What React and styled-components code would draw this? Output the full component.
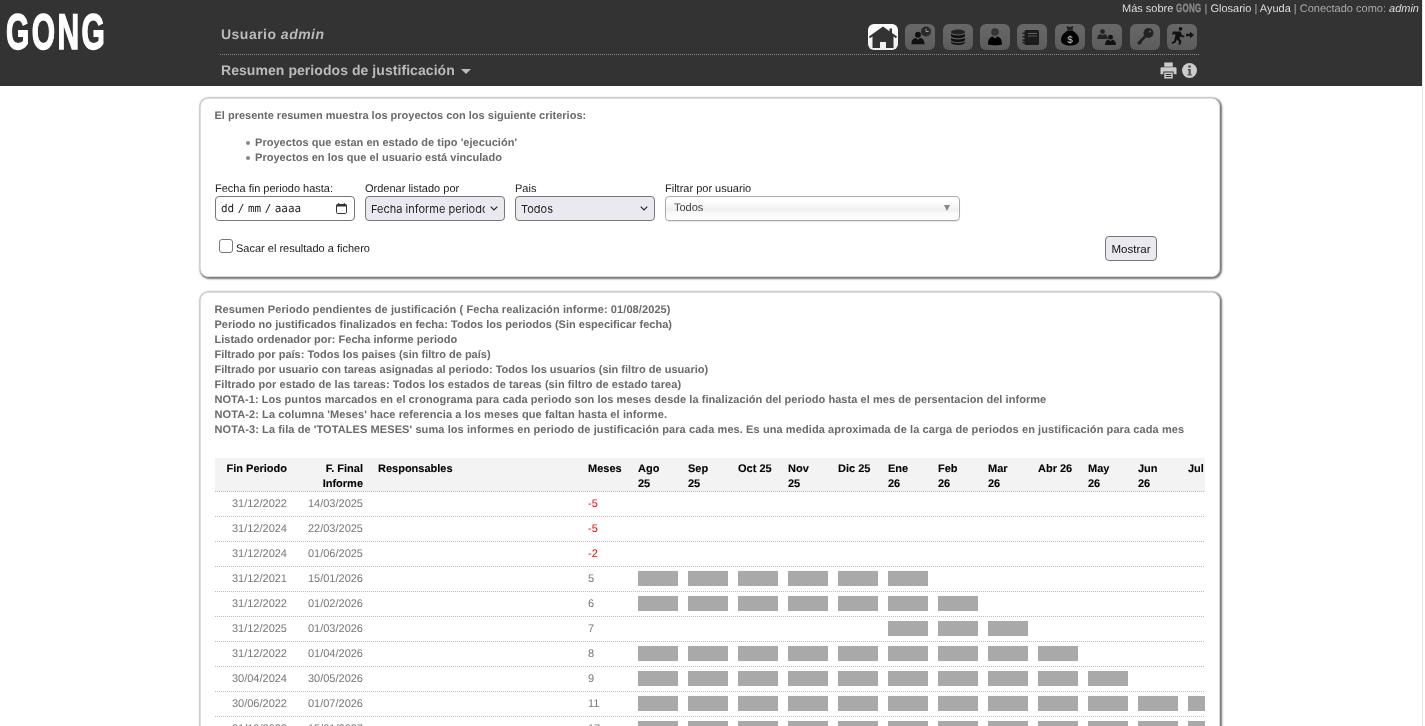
import React from 'react'
import styled, { createGlobalStyle } from 'styled-components'

const Global = createGlobalStyle`
html, body {
    margin: 0;
    padding: 0;
    height: 726px;
    overflow: hidden;
    background: #fff;
    font-family: "Liberation Sans", Arial, sans-serif;
    font-size: 11px;
    text-rendering: geometricPrecision;
}
`

const Root = styled.div`
    width: 1423px;
    height: 726px;
    overflow: hidden;
    box-sizing: border-box;
    border-right: 1px solid #e6e6e6;
    will-change: transform;
`

const Header = styled.header`
    display: grid;
    grid-template-columns: 220px 979px 1fr;
    grid-template-rows: 16px 70px;
    width: 1422px;
    background: #333;
`

const TopLinks = styled.div`
    grid-column: 1 / -1;
    grid-row: 1;
    justify-self: end;
    padding: 2px 3px 0 0;
    color: #aaa;
    font-size: 11px;
    line-height: 13px;
    white-space: nowrap;
    a { color: #ddd; }
    i { color: #ddd; }
`

const MiniGong = styled.span`
    display: inline-block;
    width: 25px;
    color: #888;
    font-weight: bold;
    font-size: 12px;
    line-height: 12px;
    letter-spacing: 0.5px;
    white-space: nowrap;
    -webkit-text-stroke: 0.4px #888;
    & > span {
        display: inline-block;
        transform: scaleX(0.66);
        transform-origin: left center;
    }
`

const Logo = styled.div`
    grid-column: 1;
    grid-row: 1 / 3;
    align-self: start;
    padding: 3px 0 0 6px;
    color: #fff;
    font-weight: bold;
    font-size: 50px;
    line-height: 58px;
    letter-spacing: 4px;
    -webkit-text-stroke: 1.5px #fff;
    white-space: nowrap;
    span {
        display: inline-block;
        transform: scaleX(0.6);
        transform-origin: left center;
    }
`

const HeadMain = styled.div`
    grid-column: 2;
    grid-row: 2;
    display: flex;
    flex-direction: column;
    padding-top: 8px;
`

const UserRow = styled.div`
    display: flex;
    justify-content: space-between;
    align-items: flex-start;
    height: 31px;
    box-sizing: border-box;
    border-bottom: 1px dotted #8a8a8a;
`

const UserName = styled.div`
    padding: 1px 0 0 1px;
    color: #bbb;
    font-weight: bold;
    font-size: 14px;
    line-height: 18px;
    letter-spacing: 0.48px;
    i { font-weight: bold; }
`

const IconBar = styled.nav`
    display: flex;
    gap: 7.4px;
    padding-right: 2px;
`

const IconButton = styled.div`
    width: 30px;
    height: 26px;
    border-radius: 6px;
    background: ${p => (p.$active ? 'linear-gradient(#fff, #eee)' : 'linear-gradient(#686868, #5c5c5c)')};
    color: ${p => (p.$active ? '#333' : '#111')};
    display: flex;
    align-items: center;
    justify-content: center;
`

const TitleRow = styled.div`
    display: flex;
    justify-content: space-between;
    align-items: center;
    height: 30px;
    padding-right: 2px;
`

const PageTitle = styled.div`
    padding-left: 1px;
    color: #bbb;
    font-weight: bold;
    font-size: 14px;
    line-height: 18px;
    letter-spacing: 0.06px;
    display: flex;
    align-items: center;
    gap: 6px;
`

const Caret = styled.span`
    width: 0;
    height: 0;
    margin-top: 3px;
    border-left: 5.5px solid transparent;
    border-right: 5.5px solid transparent;
    border-top: 5px solid #bbb;
`

const Tools = styled.div`
    display: flex;
    align-items: center;
    gap: 5px;
`

const Content = styled.main`
    width: 1020px;
    margin-left: 200px;
    padding-top: 12px;
    display: flex;
    flex-direction: column;
    gap: 15px;
`

const Panel = styled.section`
    box-sizing: border-box;
    padding: 10px 14px;
    border: 1px solid #ddd;
    border-radius: 8px;
    box-shadow: 1px 1px 2px 1px #777, 0 0 2px #bbb;
    background: #fff;
    color: #666;
    height: ${p => p.$height};
`

const Strong = styled.div`
    margin-left: -0.5px;
    font-weight: bold;
    font-size: 11px;
    line-height: 15px;
    letter-spacing: ${p => p.$track || 0}px;
    color: #6a6a6a;
    white-space: nowrap;
`

const Criteria = styled.ul`
    margin: 12px 0 0;
    padding: 0 0 0 40px;
    list-style: none;
    font-weight: bold;
    line-height: 15px;
    letter-spacing: 0.04px;
    color: #6a6a6a;
    li::before {
        content: "";
        display: inline-block;
        width: 4px;
        height: 4px;
        margin: 0 5.5px 1.5px -9.5px;
        border-radius: 50%;
        background: #888;
    }
`

const Filters = styled.div`
    display: flex;
    gap: 10px;
    margin-top: 15px;
`

const Field = styled.div`
    width: ${p => p.$width || 140}px;
`

const FieldLabel = styled.div`
    padding-top: 1px;
    color: #222;
    font-size: 11px;
    line-height: 14px;
`

const DateBox = styled.div`
    box-sizing: border-box;
    height: 25px;
    border: 1px solid #777;
    border-radius: 4px;
    display: flex;
    align-items: center;
    justify-content: space-between;
    padding: 0 6px 0 5px;
`

const DateParts = styled.div`
    display: flex;
    gap: 3.5px;
    color: #222;
    font-family: "DejaVu Sans Mono", monospace;
    font-size: 11px;
`

const SelectWrap = styled.div`
    position: relative;
    height: 25px;
    svg {
        position: absolute;
        right: 7px;
        top: 10px;
    }
`

const NativeSelect = styled.select`
    appearance: none;
    box-sizing: border-box;
    width: 100%;
    height: 25px;
    padding: 0 19px 0 5px;
    border: 1px solid #777;
    border-radius: 4px;
    background: #e9e9ef;
    color: #222;
    font-family: Inter, sans-serif;
    font-size: 11px;
`

const Chosen = styled.div`
    box-sizing: border-box;
    height: 25px;
    border: 1px solid #aaa;
    border-radius: 4px;
    padding: 0 8px 2px;
    display: flex;
    align-items: center;
    justify-content: space-between;
    background: linear-gradient(#fff 20%, #f0f0f0 55%, #fafafa 72%, #fff);
    box-shadow: 0 1px 1px rgba(0, 0, 0, 0.1);
    color: #444;
    font-size: 11px;
`

const ChosenArrow = styled.span`
    width: 0;
    height: 0;
    margin: 1px 1px 0 0;
    border-left: 3.5px solid transparent;
    border-right: 3.5px solid transparent;
    border-top: 6px solid #888;
`

const ActionRow = styled.div`
    display: flex;
    justify-content: space-between;
    align-items: flex-start;
    margin-top: 15px;
    padding: 0 48px 0 4px;
`

const CheckLabel = styled.label`
    display: flex;
    align-items: flex-start;
    gap: 3px;
    margin-top: 3px;
    color: #222;
    font-size: 11px;
    span {
        margin-top: 3px;
        line-height: 14px;
    }
`

const Check = styled.input`
    appearance: none;
    width: 14px;
    height: 14px;
    margin: 0;
    border: 1px solid #777;
    border-radius: 3px;
    background: #fff;
`

const Button = styled.button`
    width: 52px;
    height: 25px;
    padding: 0;
    border: 1px solid #777;
    border-radius: 4px;
    background: #e9e9ef;
    color: #111;
    font-family: "Liberation Sans", sans-serif;
    font-size: 11.5px;
`

const Notes = styled.div`
    margin-bottom: 20px;
`

const TableScroll = styled.div`
    width: 990px;
    overflow: hidden;
`

const Row = styled.div`
    display: grid;
    grid-template-columns: 72px 76px 225px 50px repeat(12, 50px);
    width: 1023px;
    border-bottom: 1px dotted #bbb;
    height: ${p => (p.$head ? '34px' : '25px')};
    box-sizing: border-box;
    background: ${p => (p.$head ? '#f3f3f3' : 'transparent')};
`

const HeadCell = styled.div`
    padding: 4px 0 0 ${p => (p.$pad ? '15px' : '0')};
    color: #000;
    font-weight: bold;
    font-size: 11px;
    line-height: 15px;
    text-align: ${p => (p.$right ? 'right' : 'left')};
    white-space: pre-line;
    -webkit-text-stroke: 0.1px #000;
`

const Cell = styled.div`
    color: ${p => (p.$late ? '#f00' : '#777')};
    font-size: 11px;
    line-height: 24px;
    text-align: ${p => (p.$right ? 'right' : 'left')};
`

const Bar = styled.div`
    width: 40px;
    height: 15px;
    margin-top: 4px;
    background: ${p => (p.$on ? '#a9a9a9' : 'transparent')};
`

const Bust = ({ x, y, s = 1, fill = 'currentColor' }) => (
    <g transform={`translate(${x} ${y}) scale(${s})`} fill={fill}>
        <circle cx="0" cy="-4.5" r="3.6" />
        <path d="M-8 7 C-8 1.5 -5 -0.5 -2.5 -0.5 L0 1.5 L2.5 -0.5 C5 -0.5 8 1.5 8 7 Z" />
    </g>
)

const Svg = ({ children }) => (
    <svg width="30" height="26" viewBox="0 0 30 26">{children}</svg>
)

const HomeIcon = () => (
    <Svg>
        <path fill="#333" d="M15 2.5 L21.5 7.2 V4.5 H24 V9 L29 12.6 L28 14.2 L25.5 12.6 V24 H18 V18 H12 V24 H4.5 V12.6 L2 14.2 L1 12.6 Z" />
    </Svg>
)

const ClockUserIcon = () => (
    <Svg>
        <circle cx="21" cy="7.5" r="5" fill="#2a2a2a" />
        <path d="M21 4.8 V7.5 H23.7" stroke="#999" strokeWidth="1" fill="none" />
        <Bust x={13} y={14.5} s={0.82} />
    </Svg>
)

const DatabaseIcon = () => (
    <Svg>
        <ellipse cx="15" cy="8" rx="7" ry="2.4" fill="#222" />
        <path fill="#111" d="M8 9.8 C10 12 20 12 22 9.8 V12.2 C20 14.8 10 14.8 8 12.2 Z" />
        <path fill="#111" d="M8 13.8 C10 16 20 16 22 13.8 V16.2 C20 18.8 10 18.8 8 16.2 Z" />
        <path fill="#111" d="M8 17.6 C10 19.8 20 19.8 22 17.6 V18.8 C20 21.8 10 21.8 8 18.8 Z" />
    </Svg>
)

const UserIcon = () => (
    <Svg>
        <circle cx="15" cy="8" r="3.8" fill="#333" />
        <path fill="#000" d="M8 20.5 C8 15 10.5 13 12.5 12.6 L15 14.6 L17.5 12.6 C19.5 13 22 15 22 20.5 C20 21.5 10 21.5 8 20.5 Z" />
    </Svg>
)

const NotebookIcon = () => (
    <Svg>
        <rect x="7.5" y="6" width="14.5" height="15" rx="1.5" fill="#1c1c1c" />
        <rect x="5.5" y="8.5" width="3" height="1.4" fill="#1c1c1c" />
        <rect x="5.5" y="12" width="3" height="1.4" fill="#1c1c1c" />
        <rect x="5.5" y="15.5" width="3" height="1.4" fill="#1c1c1c" />
        <rect x="5.5" y="18" width="3" height="1.4" fill="#1c1c1c" />
        <rect x="11" y="9" width="9" height="1" fill="#666" />
        <rect x="11" y="11.5" width="9" height="1" fill="#555" />
    </Svg>
)

const BagIcon = () => (
    <Svg>
        <path fill="#222" d="M11.5 2 C13 3 17 3 18.5 2 L17.5 6 H12.5 Z" />
        <path fill="#000" d="M12.5 6.6 H17.5 C21 9 24 12 24 16 C24 20 20 21.5 15 21.5 C10 21.5 6 20 6 16 C6 12 9 9 12.5 6.6 Z" />
        <text x="15" y="18.5" textAnchor="middle" fontSize="10" fontFamily="Liberation Sans" fill="#ccc">$</text>
    </Svg>
)

const UsersIcon = () => (
    <Svg>
        <Bust x={10.5} y={10.5} s={0.66} fill="#222" />
        <Bust x={18.5} y={16.2} s={0.68} fill="#111" />
    </Svg>
)

const KeyIcon = () => (
    <Svg>
        <circle cx="18.5" cy="9" r="5" fill="#222" />
        <circle cx="20" cy="7.5" r="1" fill="#666" />
        <path d="M15.5 12 L8 20" stroke="#222" strokeWidth="2.6" />
        <path d="M9.5 18 L11.5 20" stroke="#222" strokeWidth="1.6" />
    </Svg>
)

const ExitIcon = () => (
    <Svg>
        <circle cx="13.5" cy="4.8" r="1.9" fill="#111" />
        <path fill="#111" d="M6 7.5 H13.5 L15 11 L17.5 12 L17 13.5 L13.5 12.5 L12.5 14.5 L14.5 17 L13.5 20.5 H11.5 L12 17.5 L9.8 15.6 L8.5 18.5 L5 20 L4.5 18.5 L7 17 L8.5 11 L7.2 9.5 L6 11 L5 10 Z" />
        <path fill="#111" d="M19 9.8 H23 V7.8 L27 11 L23 14.2 V12.2 H19 Z" />
    </Svg>
)

const PrintIcon = () => (
    <svg width="17" height="17" viewBox="0 0 17 18">
        <rect x="4" y="0.5" width="9" height="4.5" fill="#ccc" />
        <path fill="#ccc" d="M1.5 5.5 H15.5 Q17 5.5 17 7 V13 H14 V10 H3 V13 H0 V7 Q0 5.5 1.5 5.5 Z" />
        <path fill="#ccc" d="M4 11 H13 V17.5 H4 Z M5.5 12.8 V13.8 H11.5 V12.8 Z M5.5 14.8 V15.8 H11.5 V14.8 Z" fillRule="evenodd" />
    </svg>
)

const InfoIcon = () => (
    <svg width="15" height="15" viewBox="0 0 15 15">
        <circle cx="7.5" cy="7.5" r="7.5" fill="#ccc" />
        <circle cx="7.5" cy="3.6" r="1.4" fill="#555" />
        <path fill="#555" d="M5.8 6 H8.8 V11.2 H9.8 V12.4 H5.4 V11.2 H6.5 V7.2 H5.8 Z" />
    </svg>
)

const CalendarIcon = () => (
    <svg width="13" height="13" viewBox="0 0 13 13">
        <rect x="1.5" y="2.5" width="10" height="9" rx="1.2" fill="none" stroke="#333" />
        <rect x="1.5" y="2.5" width="10" height="2" fill="#333" />
        <rect x="3.2" y="1" width="1" height="2" fill="#333" />
        <rect x="8.8" y="1" width="1" height="2" fill="#333" />
    </svg>
)

const Chevron = () => (
    <svg width="8" height="5" viewBox="0 0 8 5">
        <path d="M0.7 0.7 L4 4 L7.3 0.7" fill="none" stroke="#222" strokeWidth="1.1" />
    </svg>
)

const navIcons = [HomeIcon, ClockUserIcon, DatabaseIcon, UserIcon, NotebookIcon, BagIcon, UsersIcon, KeyIcon, ExitIcon]

// second value = letter spacing that brings the line to the width it has in the original
const notes = [
    ['Resumen Periodo pendientes de justificación ( Fecha realización informe: 01/08/2025)', 0.095],
    ['Periodo no justificados finalizados en fecha: Todos los periodos (Sin especificar fecha)', 0.012],
    ['Listado ordenador por: Fecha informe periodo', 0],
    ['Filtrado por país: Todos los paises (sin filtro de país)', 0],
    ['Filtrado por usuario con tareas asignadas al periodo: Todos los usuarios (sin filtro de usuario)', 0],
    ['Filtrado por estado de las tareas: Todos los estados de tareas (sin filtro de estado tarea)', 0.066],
    ['NOTA-1: Los puntos marcados en el cronograma para cada periodo son los meses desde la finalización del periodo hasta el mes de persentacion del informe', 0.053],
    ["NOTA-2: La columna 'Meses' hace referencia a los meses que faltan hasta el informe.", 0.096],
    ["NOTA-3: La fila de 'TOTALES MESES' suma los informes en periodo de justificación para cada mes. Es una medida aproximada de la carga de periodos en justificación para cada mes", 0.09],
]

const months = ['Ago\n25', 'Sep\n25', 'Oct 25', 'Nov\n25', 'Dic 25', 'Ene\n26', 'Feb\n26', 'Mar\n26', 'Abr 26', 'May\n26', 'Jun\n26', 'Jul 26']

// from / to = first and last month with a bar, -1 means none
const rows = [
    ['31/12/2022', '14/03/2025', -5, -1, -1],
    ['31/12/2024', '22/03/2025', -5, -1, -1],
    ['31/12/2024', '01/06/2025', -2, -1, -1],
    ['31/12/2021', '15/01/2026', 5, 0, 5],
    ['31/12/2022', '01/02/2026', 6, 0, 6],
    ['31/12/2025', '01/03/2026', 7, 5, 7],
    ['31/12/2022', '01/04/2026', 8, 0, 8],
    ['30/04/2024', '30/05/2026', 9, 0, 9],
    ['30/06/2022', '01/07/2026', 11, 0, 11],
    ['01/10/2022', '15/01/2027', 17, 0, 11],
]

const App = () => (
    <Root>
        <Global />
        <Header>
            <TopLinks>
                <a>Más sobre <MiniGong><span>GONG</span></MiniGong></a> | <a>Glosario</a> | <a>Ayuda</a> | Conectado como: <i>admin</i>
            </TopLinks>
            <Logo><span>GONG</span></Logo>
            <HeadMain>
                <UserRow>
                    <UserName>Usuario <i>admin</i></UserName>
                    <IconBar>
                        {navIcons.map((Icon, i) => (
                            <IconButton key={i} $active={i === 0}><Icon /></IconButton>
                        ))}
                    </IconBar>
                </UserRow>
                <TitleRow>
                    <PageTitle>Resumen periodos de justificación <Caret /></PageTitle>
                    <Tools><PrintIcon /><InfoIcon /></Tools>
                </TitleRow>
            </HeadMain>
        </Header>
        <Content>
            <Panel $height="179px">
                <Strong>El presente resumen muestra los proyectos con los siguiente criterios:</Strong>
                <Criteria>
                    <li>Proyectos que estan en estado de tipo 'ejecución'</li>
                    <li>Proyectos en los que el usuario está vinculado</li>
                </Criteria>
                <Filters>
                    <Field>
                        <FieldLabel>Fecha fin periodo hasta:</FieldLabel>
                        <DateBox>
                            <DateParts><span>dd</span><span>/</span><span>mm</span><span>/</span><span>aaaa</span></DateParts>
                            <CalendarIcon />
                        </DateBox>
                    </Field>
                    <Field>
                        <FieldLabel>Ordenar listado por</FieldLabel>
                        <SelectWrap>
                            <NativeSelect defaultValue="fecha"><option value="fecha">Fecha informe periodo</option></NativeSelect>
                            <Chevron />
                        </SelectWrap>
                    </Field>
                    <Field>
                        <FieldLabel>Pais</FieldLabel>
                        <SelectWrap>
                            <NativeSelect defaultValue="todos"><option value="todos">Todos</option></NativeSelect>
                            <Chevron />
                        </SelectWrap>
                    </Field>
                    <Field $width={295}>
                        <FieldLabel>Filtrar por usuario</FieldLabel>
                        <Chosen>Todos<ChosenArrow /></Chosen>
                    </Field>
                </Filters>
                <ActionRow>
                    <CheckLabel><Check type="checkbox" /><span>Sacar el resultado a fichero</span></CheckLabel>
                    <Button>Mostrar</Button>
                </ActionRow>
            </Panel>
            <Panel $height="600px">
                <Notes>
                    {notes.map(([text, track]) => <Strong key={text} $track={track}>{text}</Strong>)}
                </Notes>
                <TableScroll>
                    <Row $head>
                        <HeadCell $right>Fin Periodo</HeadCell>
                        <HeadCell $right>F. Final Informe</HeadCell>
                        <HeadCell $pad>Responsables</HeadCell>
                        <HeadCell>Meses</HeadCell>
                        {months.map(m => <HeadCell key={m}>{m}</HeadCell>)}
                    </Row>
                    {rows.map(([end, report, left, from, to]) => (
                        <Row key={end + report}>
                            <Cell $right>{end}</Cell>
                            <Cell $right>{report}</Cell>
                            <Cell />
                            <Cell $late={left < 0}>{left}</Cell>
                            {months.map((m, i) => <Bar key={m} $on={from >= 0 && i >= from && i <= to} />)}
                        </Row>
                    ))}
                </TableScroll>
            </Panel>
        </Content>
    </Root>
)

export default App
